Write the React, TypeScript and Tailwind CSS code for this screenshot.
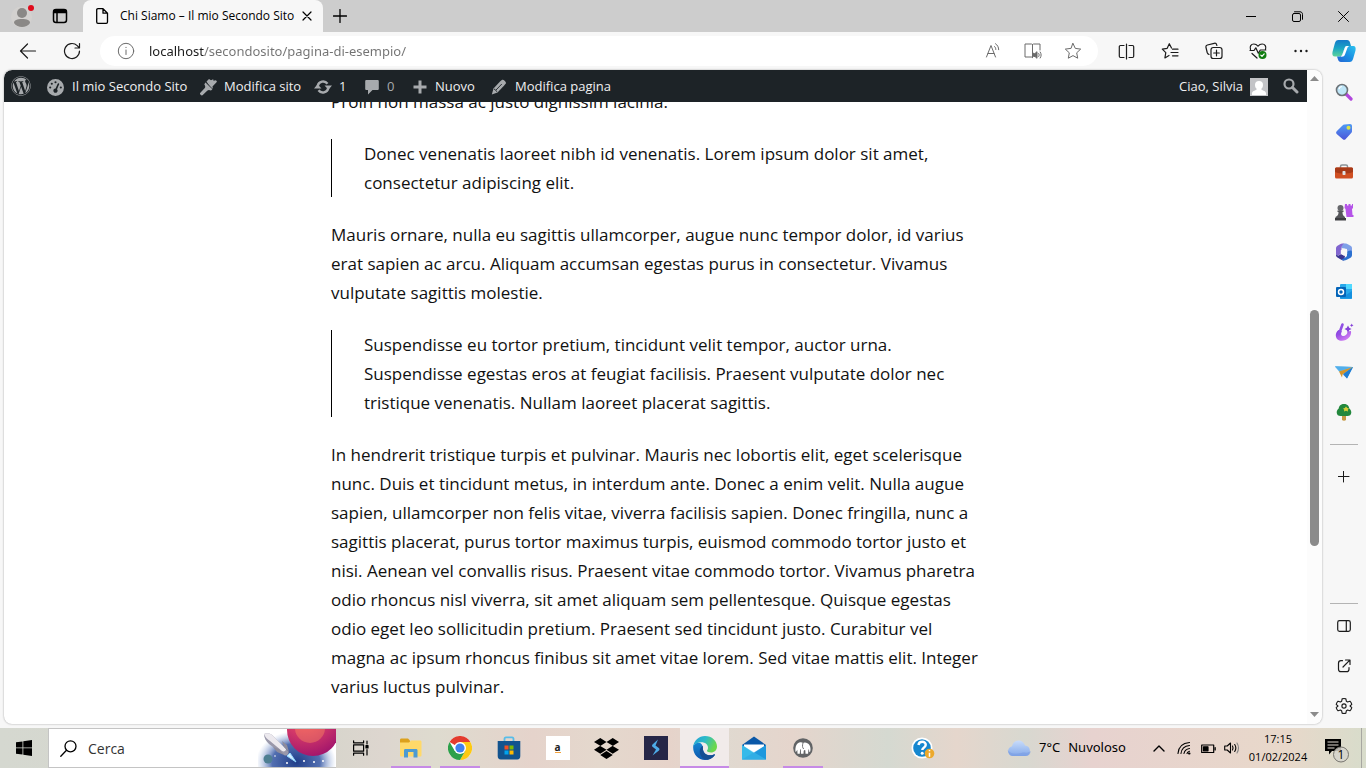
import type { ReactNode } from "react";
import { FaWordpress, FaDropbox } from "react-icons/fa";
import { FaGaugeHigh } from "react-icons/fa6";

type DrawProps = { size?: number; box?: string; width?: number; className?: string; children: ReactNode };

function Line({ size = 20, box = "0 0 20 20", width = 1.2, className, children }: DrawProps) {
  return (
    <svg width={size} height={size} viewBox={box} fill="none" stroke="currentColor" strokeWidth={width} strokeLinecap="round" strokeLinejoin="round" className={className} aria-hidden="true">
      {children}
    </svg>
  );
}

function Art({ size = 20, box = "0 0 20 20", className, children }: DrawProps) {
  return (
    <svg width={size} height={size} viewBox={box} className={className} aria-hidden="true">
      {children}
    </svg>
  );
}

function IconButton({ label, className, children }: { label: string; className: string; children: ReactNode }) {
  return (
    <button type="button" aria-label={label} className={`flex shrink-0 items-center justify-center ${className}`}>
      {children}
    </button>
  );
}

function TitleBar() {
  return (
    <header className="flex h-8 items-stretch bg-[#cdcdcd] text-black">
      <IconButton label="Profilo" className="w-11">
        <Art size={24} box="0 0 24 24">
          <circle cx="11.500" cy="13" r="10.500" fill="#d3d1cf" />
          <circle cx="12" cy="9" r="5" fill="#8a8886" />
          <path d="M4 19c0-3 3-4 8-4s8 1 8 4c-1.500 2.500-5 4-8 4s-6.500-1.500-8-4z" fill="#8a8886" />
          <circle cx="21" cy="4" r="3" fill="#e00b1c" />
        </Art>
      </IconButton>
      <IconButton label="Aree di lavoro" className="w-8">
        <Line size={16} box="0 0 16 16" width={1.5}>
          <rect x="1.500" y="1.500" width="13" height="13" rx="2.500" />
          <path d="M2 3.500h12M5 5v9" />
          <path d="M2 2.500h12v2H2z" fill="currentColor" />
        </Line>
      </IconButton>
      <div className="ml-[7px] flex w-60 items-center rounded-t-lg bg-[#f7f7f7]">
        <Line size={16} box="0 0 16 16" width={1.3} className="ml-[11px] shrink-0">
          <path d="M2.700 2c0-.8.500-1.300 1.300-1.300h5l4.500 4.500V14c0 .8-.5 1.300-1.300 1.300H4c-.8 0-1.300-.5-1.300-1.300zM9 .800V5.200h4.400" />
        </Line>
        <span className="ml-2.5 flex-1 whitespace-nowrap font-['Open_Sans','Noto_Sans',sans-serif] text-[12px]">Chi Siamo – Il mio Secondo Sito</span>
        <IconButton label="Chiudi scheda" className="mr-1.5 h-5 w-5">
          <Line size={10} box="0 0 10 10"><path d="M1 1l8 8M9 1l-8 8" /></Line>
        </IconButton>
      </div>
      <IconButton label="Nuova scheda" className="ml-px w-8">
        <Line size={14} box="0 0 14 14" width={1.3}><path d="M7 .500v13M.500 7h13" /></Line>
      </IconButton>
      <div className="ml-auto flex">
        <IconButton label="Riduci a icona" className="w-[46px]">
          <Line size={10} box="0 0 10 10" width={1}><path d="M0 5.500h10" /></Line>
        </IconButton>
        <IconButton label="Ripristina" className="w-[46px]">
          <Line size={11} box="0 0 11 11" width={1}>
            <rect x=".5" y="2.500" width="8" height="8" rx="1.500" />
            <path d="M2.500 .800h5.500c1.500 0 2.500 1 2.500 2.500v5" />
          </Line>
        </IconButton>
        <IconButton label="Chiudi" className="w-[46px]">
          <Line size={11} box="0 0 11 11" width={1}><path d="M.500.500l10 10M10.500.500l-10 10" /></Line>
        </IconButton>
      </div>
    </header>
  );
}

function Toolbar() {
  return (
    <div className="flex h-[38px] items-center bg-[#f7f7f7] text-[#1b1b1b]">
      <IconButton label="Indietro" className="ml-1 h-8 w-12">
        <Line size={18} box="0 0 18 18" width={1.2}><path d="M16.500 9H1.500M8.500 2L1.500 9l7 7" /></Line>
      </IconButton>
      <IconButton label="Aggiorna" className="h-8 w-10">
        <Line size={18} box="0 0 18 18" width={1.2}>
          <path d="M16.500 9a7.500 7.500 0 1 1-2.300-5.400L16.300 5.800M16.500 1.500V6H12" />
        </Line>
      </IconButton>
      <div className="ml-2 flex h-[30px] flex-1 items-center rounded-full bg-white text-[#6b6b6b]">
        <Line size={18} box="0 0 18 18" width={1} className="ml-[17px] shrink-0">
          <circle cx="9" cy="9" r="7.700" />
          <path d="M9 8v4.500M9 5.300v.3" />
        </Line>
        <input
          aria-label="Indirizzo"
          defaultValue="localhost/secondosito/pagina-di-esempio/"
          className="ml-3.5 min-w-0 flex-1 bg-linear-to-r from-[#1b1b1b] from-[55px] to-[#727272] to-[55px] bg-clip-text pt-px text-[13px] text-transparent outline-none"
        />
        <div className="mr-[5px] flex">
          <IconButton label="Leggi ad alta voce" className="h-7 w-10">
            <Line size={18} box="0 0 18 18" width={1}>
              <path d="M2.500 15L7 3.500 11.500 15M4 11.500h6" />
              <path d="M10.500 4.500c1 .8 1.300 1.700 1.300 3M11.500 1.700c2 1.300 3.200 3.500 3.200 6" />
            </Line>
          </IconButton>
          <IconButton label="Lettore immersivo" className="h-7 w-10">
            <Line size={18} box="0 0 18 18" width={1}>
              <path d="M8.500 2.500v13M8.500 2.500C8 2 7.500 2 7 2H1v13h6c1 0 1.500.2 1.500.7M8.500 2.500C9 2 9.500 2 10 2h6v6" />
              <path d="M9.500 11.500v3h1.500l2 1.800V9.700l-2 1.800z" fill="currentColor" />
              <path d="M14.700 11.500c.7 1 .7 2 0 3M16.200 10c1.300 2 1.300 4 0 6" />
            </Line>
          </IconButton>
          <IconButton label="Aggiungi ai preferiti" className="h-7 w-10">
            <Line size={18} box="0 0 18 18" width={1}>
              <path d="M9 1.500l2.300 4.900 5.400.700-4 3.700 1 5.400L9 13.600l-4.700 2.600 1-5.400-4-3.700 5.400-.7z" />
            </Line>
          </IconButton>
        </div>
      </div>
      <div className="ml-1.5 flex">
        <IconButton label="Schermo diviso" className="h-8 w-11">
          <Line size={17} box="0 0 17 17" width={1.2}>
            <path d="M8.500 1v15M6 2.500H2.500A1.200 1.200 0 0 0 1.300 3.700v9.600A1.200 1.200 0 0 0 2.500 14.500H6M11 2.500h3.500a1.200 1.200 0 0 1 1.200 1.200v9.600a1.200 1.200 0 0 1-1.200 1.200H11" />
          </Line>
        </IconButton>
        <IconButton label="Preferiti" className="h-8 w-11">
          <Line size={18} box="0 0 18 18" width={1.2}>
            <path d="M10.500 6L8.300 1.700 6.200 6.300 1.300 7.200l3.500 3.500-.9 5.200L8 13.500M11.500 7.200h5.500M10 10.500h7M11.500 13.800h5.500" />
          </Line>
        </IconButton>
        <IconButton label="Raccolte" className="h-8 w-11">
          <Line size={18} box="0 0 18 18" width={1.2}>
            <rect x="6" y="5.500" width="11" height="11" rx="2.300" />
            <path d="M11.500 8.200v5.600M8.700 11h5.600M4 12.500C2.800 12 2.500 11.500 2.200 10.500L1 5.500c-.3-1.300.2-2.200 1.400-2.500l6.800-1.700c1.300-.3 2.200.2 2.500 1.500l.2.700" />
          </Line>
        </IconButton>
        <IconButton label="Prestazioni del browser" className="h-8 w-11">
          <Line size={18} box="0 0 18 18" width={1.2}>
            <path d="M1.500 7.500C.500 4.500 2 2 4.800 2 6.800 2 8 3 9 4.200 10 3 11.200 2 13.200 2c2.800 0 4.300 2.500 3.300 5.500M1 8.500h4l1.800-2.700 2.500 5.400 2-3.200h5.500M3 11.500l5 4.500" />
            <circle cx="13.500" cy="13" r="4" fill="#107c10" stroke="none" />
            <path d="M11.800 13.100l1.200 1.200 2.200-2.400" stroke="#fff" />
          </Line>
        </IconButton>
        <IconButton label="Impostazioni e altro" className="h-8 w-[42px]">
          <Art size={16} box="0 0 16 16"><g fill="#1b1b1b"><circle cx="2.500" cy="8" r="1.200" /><circle cx="8" cy="8" r="1.200" /><circle cx="13.500" cy="8" r="1.200" /></g></Art>
        </IconButton>
        <IconButton label="Copilot" className="h-8 w-11">
          <Art size={24} box="0 0 24 24">
            <defs>
              <linearGradient id="cpA" x1="0" y1="0" x2="0" y2="1"><stop offset="0" stopColor="#1479c9" /><stop offset=".5" stopColor="#1aa5c4" /><stop offset="1" stopColor="#5ed49a" /></linearGradient>
              <linearGradient id="cpB" x1="1" y1="0" x2="0" y2="1"><stop offset="0" stopColor="#2dc3ee" /><stop offset=".5" stopColor="#1a8fe3" /><stop offset="1" stopColor="#2463d3" /></linearGradient>
            </defs>
            <path d="M6.500 1H15c1.800 0 2.500 1 3 2.500l1 3.500h-3.500c-1.700 0-2.500.8-3 2.500l-2 5.500c-.5 1.700-1.500 2.500-3.500 2.500H3c-2.500 0-3-2-2.500-4.500l2.300-8.500C3.500 2 4.500 1 6.500 1z" fill="url(#cpA)" />
            <path d="M17.500 23H9c-1.800 0-2.500-1-3-2.500L5 17.500h2.500c1.700 0 2.500-1 3-2.500l2-5.500C13 7.800 14 7 16 7h5c2.500 0 3 2 2.500 4.500l-2.300 8c-.7 2.500-1.700 3.500-3.700 3.500z" fill="url(#cpB)" />
            <path d="M14.700 7h2.500c-1 .5-1.500 1-2 2.500l-2.200 6c-.6 1.500-1.500 2.200-3.200 2.200H8.500c1-.5 1.500-1.500 2-2.700l2-5.500c.5-1.500 1.200-2.300 2.200-2.500z" fill="#fff" />
          </Art>
        </IconButton>
      </div>
    </div>
  );
}

function AdminBar() {
  const item = "flex h-8 items-center whitespace-nowrap pt-0.5";
  return (
    <nav aria-label="Barra degli strumenti" className="flex h-8 shrink-0 items-center rounded-tl-lg bg-[#1d2327] font-['Open_Sans','Noto_Sans',sans-serif] text-[13px] text-[#f0f0f1]">
      <a href="#wp" aria-label="Informazioni su WordPress" className="ml-[7px] flex h-8 w-9 items-center"><FaWordpress size={20} color="#a7aaad" /></a>
      <a href="#sito" className={`${item} w-[152px]`}><FaGaugeHigh size={17} color="#a7aaad" className="mr-2 shrink-0" />Il mio Secondo Sito</a>
      <a href="#editor" className={`${item} w-[115px]`}>
        <Art size={18} box="0 0 18 18" className="mr-[7px] shrink-0">
          <path d="M7.500 3.500L10 1l2 1.200 2.200-.9.300 1.500 2.500-.5 1 1.400-4.500 4.800.300 1.500-1 1.500z" fill="#a7aaad" />
          <path d="M6.700 4.300l6.800 6.800-1.500 1.500c-1.500-.7-2.800-.8-3.800.2L3.500 17.300c-1 .7-3.200-1.300-2.400-2.400l4.500-4.700c1-1 .8-2.300-.3-4z" fill="#a7aaad" />
          <path d="M6.800 4.300l6.600 6.600" stroke="#1d2327" strokeWidth=".8" />
        </Art>
        Modifica sito
      </a>
      <a href="#aggiornamenti" className={`${item} w-[50px]`}>
        <Art size={18} box="0 0 18 18" className="mr-[7px] shrink-0">
          <path d="M3.700 8A5.500 5.500 0 0 1 13.500 5.700M14.300 10a5.500 5.500 0 0 1-9.800 2.300" fill="none" stroke="#a7aaad" strokeWidth="2.400" />
          <path d="M10.500 7.500H18L14.500 11.700zM7.500 10.500H0L3.500 6.300z" fill="#a7aaad" />
        </Art>
        1
      </a>
      <a href="#commenti" className={`${item} w-[49px] text-[#a7aaad]`}>
        <Art size={16} box="0 0 16 16" className="mr-[7px] shrink-0"><path d="M2.500 1h11c.8 0 1.300.5 1.300 1.300v7.400c0 .8-.5 1.300-1.300 1.300H8.500L4 15.500V11H2.500c-.8 0-1.300-.5-1.300-1.300V2.300C1.200 1.500 1.700 1 2.500 1z" fill="#a7aaad" /></Art>
        0
      </a>
      <a href="#nuovo" className={`${item} w-[78px]`}>
        <Art size={14} box="0 0 14 14" className="mr-2 shrink-0"><path d="M5.500 .500h3v5H13.500v3H8.500v5h-3v-5H.500v-3h5z" fill="#a7aaad" /></Art>
        Nuovo
      </a>
      <a href="#pagina" className={item}>
        <Art size={16} box="0 0 16 16" className="mr-2 shrink-0">
          <path d="M9 2.500l1.800-1.600c1.500-1.200 5 2.100 4 3.700L13.200 6.500 6.500 13.500.800 15.500 2.500 9.500z" fill="#a7aaad" />
          <path d="M5 11L10.800 5M3 10c1.300.5 2.300 1.500 2.800 2.800" stroke="#1d2327" strokeWidth=".9" fill="none" />
        </Art>
        Modifica pagina
      </a>
      <a href="#profilo" className={`${item} ml-auto`}>
        Ciao, Silvia
        <Art size={18} box="0 0 18 18" className="ml-[7px]">
          <rect width="18" height="18" fill="#c3c4c7" />
          <path d="M9 3a4 4 0 0 0-4 4c0 2 .8 3 1.800 4-.3 1.500-4.300 1.500-4.800 4v2h14v-2c-.5-2.500-4.500-2.500-4.800-4 1-1 1.800-2 1.800-4a4 4 0 0 0-4-4z" fill="#fff" />
        </Art>
      </a>
      <IconButton label="Cerca nel sito" className="ml-[11px] mr-1 h-8 w-6">
        <Art size={16} box="0 0 16 16"><circle cx="6" cy="6" r="4.500" fill="none" stroke="#a7aaad" strokeWidth="2.200" /><path d="M9.500 9.500L14 14" stroke="#a7aaad" strokeWidth="3" strokeLinecap="round" /></Art>
      </IconButton>
    </nav>
  );
}

function Lines({ rows }: { rows: string[] }) {
  return (
    <>
      {rows.map((row) => (
        <span key={row} className="block whitespace-nowrap">{row} </span>
      ))}
    </>
  );
}

function Article() {
  return (
    <article className="-mt-[15px] ml-[327px] flex w-[650px] flex-col gap-[23px] font-['Open_Sans','Noto_Sans',sans-serif] text-[17px] leading-[29px] text-[#111]">
      <p><Lines rows={["Proin non massa ac justo dignissim lacinia."]} /></p>
      <blockquote className="border-l border-black pl-8">
        <Lines rows={["Donec venenatis laoreet nibh id venenatis. Lorem ipsum dolor sit amet,", "consectetur adipiscing elit."]} />
      </blockquote>
      <p>
        <Lines rows={["Mauris ornare, nulla eu sagittis ullamcorper, augue nunc tempor dolor, id varius", "erat sapien ac arcu. Aliquam accumsan egestas purus in consectetur. Vivamus", "vulputate sagittis molestie."]} />
      </p>
      <blockquote className="border-l border-black pl-8">
        <Lines rows={["Suspendisse eu tortor pretium, tincidunt velit tempor, auctor urna.", "Suspendisse egestas eros at feugiat facilisis. Praesent vulputate dolor nec", "tristique venenatis. Nullam laoreet placerat sagittis."]} />
      </blockquote>
      <p>
        <Lines
          rows={[
            "In hendrerit tristique turpis et pulvinar. Mauris nec lobortis elit, eget scelerisque",
            "nunc. Duis et tincidunt metus, in interdum ante. Donec a enim velit. Nulla augue",
            "sapien, ullamcorper non felis vitae, viverra facilisis sapien. Donec fringilla, nunc a",
            "sagittis placerat, purus tortor maximus turpis, euismod commodo tortor justo et",
            "nisi. Aenean vel convallis risus. Praesent vitae commodo tortor. Vivamus pharetra",
            "odio rhoncus nisl viverra, sit amet aliquam sem pellentesque. Quisque egestas",
            "odio eget leo sollicitudin pretium. Praesent sed tincidunt justo. Curabitur vel",
            "magna ac ipsum rhoncus finibus sit amet vitae lorem. Sed vitae mattis elit. Integer",
            "varius luctus pulvinar.",
          ]}
        />
      </p>
    </article>
  );
}

function ScrollBar() {
  return (
    <div className="flex w-[15px] shrink-0 flex-col items-center rounded-r-lg bg-[#fcfcfc]">
      <Art size={9} box="0 0 9 9" className="mt-1 shrink-0"><path d="M0 7l4.500-5L9 7z" fill="#8b8b8b" /></Art>
      <div className="flex-[227]" />
      <div className="w-[9px] flex-[236] rounded-full bg-[#8b8b8b]" />
      <div className="flex-[164]" />
      <Art size={9} box="0 0 9 9" className="mb-[5px] shrink-0"><path d="M0 2l4.500 5L9 2z" fill="#8b8b8b" /></Art>
    </div>
  );
}

function Sidebar() {
  const tools: [string, ReactNode][] = [
    ["Cerca", <Art key="a" size={18} box="0 0 18 18"><path d="M11 11l5 5" stroke="#b146dd" strokeWidth="3.200" strokeLinecap="round" /><circle cx="7" cy="7" r="5.500" fill="#bfe6f8" stroke="#6d7378" strokeWidth="1.600" /><path d="M4 6a3.500 3.500 0 0 1 3-2.500" stroke="#fff" strokeWidth="1.200" fill="none" /></Art>],
    ["Shopping", <Art key="b" size={18} box="0 0 18 18"><defs><linearGradient id="tag" x1="0" y1="0" x2="0" y2="1"><stop stopColor="#4f9bf5" /><stop offset="1" stopColor="#4b55d9" /></linearGradient></defs><path d="M9.500 1.500L15 1c1.300 0 2 .700 2 2v5c0 1-.3 1.500-1 2.200l-5.500 6c-.8.800-1.800.800-2.700 0L1.700 11c-.8-.8-.8-1.800 0-2.700l5.800-5.800c.6-.6 1.100-.9 2-1z" fill="url(#tag)" /><circle cx="13.500" cy="4.800" r="2" fill="#d9e34a" /></Art>],
    ["Strumenti", <Art key="c" size={20}><path d="M6.500 6V4.500c0-1 .5-1.500 1.500-1.500h4c1 0 1.500.5 1.500 1.500V6" fill="none" stroke="#8b9297" strokeWidth="1.500" /><rect x="1" y="5.500" width="18" height="11" rx="1.500" fill="#cf4f22" /><path d="M1 7c0-1 .5-1.500 1.500-1.500h15c1 0 1.500.5 1.500 1.500v3c-5 2-13 2-18 0z" fill="#a73a18" /><rect x="8.500" y="9" width="3" height="4" rx=".8" fill="#dfe3e6" /></Art>],
    ["Giochi", <Art key="d" size={20}><path d="M11 2h2v1.500h1.500V2h2v1.500H18V2h1v4l-1 1 .5 6h1v2h-7l-1-8-1-1z" fill="#b554e8" /><circle cx="6.500" cy="6" r="3" fill="#66676b" /><path d="M3.500 8.500h6v1.500H8.500c0 2.500.5 3.500 2.500 5V18H1.500v-3c2.500-1.500 3-2.500 3-5h-1z" fill="#55565a" /><path d="M1 16h11v2.500H1z" fill="#3c3d40" /></Art>],
    ["Microsoft 365", <Art key="e" size={20}>
      <path d="M10 1.500h1.500c1 0 1.500.2 2.300.7l2.700 1.600c1 .6 1.500 1.400 1.500 2.700V12l-5-2.500V7L7.500 6C7.500 4 8.300 1.500 10 1.500z" fill="#7fa0e8" />
      <path d="M10.500 1.500C8.500 2.500 7.500 4 7.500 6.500V12L3 13.800c-.7-.6-1-1.400-1-2.300v-5c0-1.300.5-2 1.500-2.700l3-1.700c1-.6 2-.6 4-.6z" fill="#8165cf" />
      <path d="M2 11.500c0 1.500 1.500 2.500 3 1.700L7.500 12l3.500 2-1 4.500c-1 0-2-.2-2.800-.7l-3.700-2.200C2.500 15 2 14 2 13z" fill="#3a3591" />
      <path d="M18 10v3c0 1.300-.5 2-1.500 2.700l-3.700 2.100c-1.500.8-3.500 1-4.800.200-1-.5.500-.8 1.500-1.500l2.500-1.500c.7-.5 1-1 1-2V9.500l3.500-1c.8-.2 1.500.5 1.500 1.500z" fill="#2b70d0" />
      <path d="M10 6.500l3.200 1.800v3.600L10 13.700l-3.200-1.800V8.300z" fill="#f7f7f7" />
    </Art>],
    ["Outlook", <Art key="f" size={20}><rect x="6" y="2" width="12" height="15" rx="1" fill="#28a8ea" /><path d="M12 2h6v5h-6z" fill="#50d9ff" /><path d="M6 9l6 4 6-4v7.500H6z" fill="#1490df" /><rect x="2" y="5" width="10" height="10" rx="1" fill="#0364b8" /><circle cx="7" cy="10" r="2.500" fill="none" stroke="#fff" strokeWidth="1.500" /></Art>],
    ["Designer", <Art key="g" size={20}><defs><linearGradient id="des" x1="0" y1="0" x2="1" y2="1"><stop stopColor="#7a35dc" /><stop offset="1" stopColor="#e58df8" /></linearGradient></defs><path d="M4.500 8C.500 11 1 17 5.500 18.500 12 20 18 15 17 9l-3.500.5c0 3.500-3.500 5.500-5.500 4.200C6.500 12.500 7 11 8 9.500z" fill="url(#des)" /><path d="M8.500 2.500L5 12" stroke="#9150e4" strokeWidth="2.600" strokeLinecap="round" /><path d="M14 3.500l1.200 2.300L17.500 7l-2.300 1.200L14 10.500l-1.200-2.300L10.500 7l2.300-1.200z" fill="#8541d9" /><path d="M17.700 1.500l.6 1.200 1.200.6-1.200.6-.6 1.200-.6-1.200-1.200-.6 1.200-.6z" fill="#8541d9" /></Art>],
    ["Drop", <Art key="h" size={20}><path d="M1 4.500L19 5l-6 11.500-3.500-5z" fill="#319be5" /><path d="M1 4.500L19 5 9.500 11.500 5 9.500z" fill="#63bdf0" /><path d="M1 4.500L19 5 5.500 9z" fill="#52aeea" /><path d="M5 9.500L19 5 8.500 12.500 8 15.500z" fill="#d5952d" /><path d="M19 5l-6 11.500-4-4z" fill="#217dd3" /></Art>],
    ["Albero", <Art key="i" size={20}><path d="M8 12h4v6c-1 1-3 1-4 0z" fill="#c79a45" /><path d="M10 2c4 0 5 2.500 5.300 4.500 1.200 1 2 2.300 2 4 0 2.500-1.800 3.500-3.800 3.500h-7c-2 0-3.800-1-3.800-3.500 0-1.700.8-3 2-4C5 4.500 6 2 10 2z" fill="#23883d" /><path d="M12 4.500l1.200 1.500 1.800.5-1.200 1.200.2 1.800-2-.8-2 .8.200-1.800L9 6.500l1.800-.5z" fill="#d7ce38" /></Art>],
  ];
  return (
    <aside className="flex w-11 shrink-0 flex-col items-center pt-0.5 text-[#1b1b1b]">
      {tools.map(([label, art]) => (
        <IconButton key={label} label={label} className="h-10 w-11">{art}</IconButton>
      ))}
      <hr className="mt-3 w-7 border-[#b4b4b4]" />
      <IconButton label="Personalizza" className="mt-3 h-10 w-11">
        <Line size={12} box="0 0 12 12" width={1}><path d="M5.500 0v11M0 5.500h11" /></Line>
      </IconButton>
      <hr className="mt-auto w-7 border-[#b4b4b4]" />
      <IconButton label="Nascondi barra laterale" className="mt-0.5 h-10 w-11">
        <Line size={14} box="0 0 14 14"><rect x=".7" y="1.700" width="12.600" height="10.600" rx="1.800" /><path d="M9.300 2v10" /></Line>
      </IconButton>
      <IconButton label="Apri collegamento" className="h-10 w-11">
        <Line size={14} box="0 0 14 14"><path d="M5.500 1.700H4A2.500 2.500 0 0 0 1.500 4.200v6A2.500 2.500 0 0 0 4 12.700h5.500a2.500 2.500 0 0 0 2.500-2.500V8.500M8.500 1h4.500v4.500M12.800 1.200L6 8" /></Line>
      </IconButton>
      <IconButton label="Impostazioni" className="mb-0.5 h-10 w-11">
        <Line size={18} box="0 0 24 24" width={1.5}>
          <path d="M9.500 2.500C11 1.900 13 1.900 14.500 2.500L15.200 5.700l1.500.9 3.200-1c1.200 1.200 2 2.700 2.500 4.300L20 12l2.400 2.100c-.5 1.600-1.300 3.100-2.500 4.300l-3.200-1-1.500.9-.7 3.200c-1.500.6-3.500.6-5 0l-.7-3.200-1.500-.9-3.200 1c-1.200-1.200-2-2.700-2.500-4.300L4 12 1.600 9.900c.5-1.600 1.300-3.100 2.500-4.300l3.200 1 1.500-.9z" />
          <circle cx="12" cy="12" r="2.800" />
        </Line>
      </IconButton>
    </aside>
  );
}

function SearchArt() {
  return (
    <svg width="78" height="38" viewBox="0 0 78 38" className="shrink-0" aria-hidden="true">
      <defs>
        <radialGradient id="sky"><stop offset="0" stopColor="#1f3d88" /><stop offset=".6" stopColor="#3f5fa8" stopOpacity=".9" /><stop offset="1" stopColor="#9cb4df" stopOpacity="0" /></radialGradient>
        <radialGradient id="planet" cx=".35" cy=".15" r=".9"><stop offset="0" stopColor="#ff8a62" /><stop offset=".4" stopColor="#dc3f68" /><stop offset="1" stopColor="#a0146c" /></radialGradient>
      </defs>
      <ellipse cx="38" cy="33" rx="40" ry="31" fill="url(#sky)" />
      <circle cx="55" cy="1" r="26" fill="url(#planet)" />
      <circle cx="52" cy="-1" r="15" fill="#ff9360" fillOpacity=".4" />
      <circle cx="10" cy="30" r="4.500" fill="#4e7f92" />
      <path d="M6 5c4-2 8 0 11 4l13 13c2 2-1 6-4 4L11 15C8 12 6 9 6 5z" fill="#9a98aa" />
      <path d="M6 5c4-2 8 0 11 4l11 11c0 2-2 3-4 2L12 12C9 10 7 8 6 5z" fill="#ece9ee" />
      <path d="M15 18l6 2 5 6-7-3zM24 12l5 4 2 7-5-5z" fill="#8e8c9c" />
      <path d="M32 24l6 9-9-6z" fill="#d5f0ff" stroke="#90d5ff" />
      <g fill="#fff"><circle cx="29" cy="34" r="1" /><circle cx="46" cy="32" r="1" /><circle cx="56" cy="33" r="1" /><circle cx="65" cy="32" r="1" /><circle cx="17" cy="27" r=".8" /></g>
    </svg>
  );
}

function Taskbar() {
  const apps: [string, ReactNode, string][] = [
    ["Esplora file", <Art key="1" size={24} box="0 0 24 24"><path d="M1 4c0-1 .500-1.500 1.500-1.500H9l2 2V7H1z" fill="#dca11d" /><path d="M1 6.500h9l2-2h9c1 0 1.500.5 1.500 1.500v13c0 1-.5 1.500-1.500 1.500H2.500c-1 0-1.500-.5-1.500-1.500z" fill="#ffd969" /><path d="M5 21.500v-7c0-1 .500-1.500 1.500-1.500h10.500c1 0 1.500.5 1.500 1.500v7h-4v-5.500H9v5.500z" fill="#4d9bd2" /></Art>, "under"],
    ["Chrome", <Art key="2" size={24} box="0 0 24 24"><circle cx="12" cy="12" r="12" fill="#fff" /><path d="M12 12L1.600 6A12 12 0 0 1 22.400 6H12z" fill="#e33b2e" /><path d="M12 6h10.400A12 12 0 0 1 12 24l5.200-9z" fill="#fdc912" /><path d="M1.600 6A12 12 0 0 0 12 24l5.200-9L12 12 6.800 15z" fill="#2da04a" /><circle cx="12" cy="12" r="6" fill="#fff" /><circle cx="12" cy="12" r="4.600" fill="#4080ee" /></Art>, "under"],
    ["Microsoft Store", <Art key="3" size={24} box="0 0 24 24"><path d="M7.500 6V3c0-1 .500-1.700 1.500-1.700h6c1 0 1.500.7 1.500 1.700v3" fill="none" stroke="#57bde9" strokeWidth="1.800" /><path d="M.700 5h22.600v15c0 2-1 3.500-3 3.500H3.700c-2 0-3-1.500-3-3.500z" fill="#12538e" /><path d="M7.500 9.500h4v4h-4z" fill="#f25022" /><path d="M12.500 9.500h4v4h-4z" fill="#7fba00" /><path d="M7.500 14.500h4v4h-4z" fill="#00a4ef" /><path d="M12.500 14.500h4v4h-4z" fill="#ffb900" /></Art>, ""],
    ["Amazon", <span key="4" className="flex h-6 w-6 items-center justify-center bg-white"><span className="border-b border-[#f5a33c] text-[10px] leading-[9px] font-bold text-[#222]">a</span></span>, ""],
    ["Dropbox", <FaDropbox key="5" size={25} color="#000" />, ""],
    ["Shadow", <Art key="6" size={24} box="0 0 24 24"><rect width="24" height="24" fill="#262647" /><path d="M14 3.500L8.500 8.500c-.8.800-.6 1.800.3 2.500l3.200 2.500-3.500 6L15 14.500c.8-.8.600-1.700-.2-2.400L11.500 9.500z" fill="#4dabe8" /></Art>, ""],
    ["Edge", <Art key="7" size={24} box="0 0 24 24"><defs><linearGradient id="edA" x1="0" y1="0" x2="1" y2=".4"><stop stopColor="#229fd8" /><stop offset=".5" stopColor="#2dbbc8" /><stop offset="1" stopColor="#6bd84c" /></linearGradient><linearGradient id="edB" x1="0" y1="0" x2="0" y2="1"><stop stopColor="#1686d2" /><stop offset="1" stopColor="#0d57ac" /></linearGradient></defs>
      <path d="M.300 9.500C-.800 17 4.500 24 12 24c4 0 7.500-1.800 9.700-4.800.4-.6-.2-1.100-.8-.8-6 2.600-11-1-11-6.200C9.900 9 8 6 4 6.500z" fill="url(#edB)" />
      <path d="M9.900 9.800c-2 1-3.200 3.200-3.200 5.700 0 4.500 3.500 8.300 7.600 8.300 3-.5 5.700-2.200 7.400-4.600.4-.6-.2-1.100-.8-.8-6 2.600-11-1-11-5.700z" fill="#144e93" />
      <path d="M.200 10.500C1 4.500 6 0 12 0c7 0 12 5 12 10.500 0 3.800-2.700 6-6 6-2.500 0-4-.6-4-1.700 0-.7 1-1.200 1-3C15 8.500 12 6.300 8.500 6.300 4.500 6.300 1.500 8 .200 10.500z" fill="url(#edA)" />
    </Art>, "active"],
    ["Posta", <Art key="8" size={24} box="0 0 24 24"><path d="M0 9l12-8.500L24 9v14H0z" fill="#0a58a8" /><path d="M2 8.500h20V18H2z" fill="#fff" /><path d="M0 9l12 8L24 9v14.500H0z" fill="#27aee4" /><path d="M24 9v14.500H0z" fill="#1789d8" fillOpacity=".6" /><path d="M0 9v14.500h24z" fill="#49caf0" fillOpacity=".45" /></Art>, ""],
    ["MAMP", <Art key="9" size={20}>
      <circle cx="10" cy="10" r="9.800" fill="#626466" />
      <path d="M2.500 14C2 8.500 3.500 4.800 7.500 4.300c1-.1 1.800.2 2.500.7.700-.4 1.300-.6 2-.5 3.500.3 5.500 3 5.500 6.500 0 1.500-.2 2.700-.8 3.300-.6-.5-.5-1.300-.7-2.800h-.6l-.3 4.200h-2.600l-.2-3.500-.8-.2c-.5.300-.7.500-.8 1l-.2 2.700H8l-.2-4.200-.7-.2-.3 4.400H4.500l-.2-3.900c-.6.700-.6 1.700-1.800 2.200z" fill="#fff" />
      <path d="M10 5c-.8 2.500-.7 4.500.7 6" stroke="#626466" strokeWidth=".9" fill="none" />
    </Art>, "under"],
  ];
  return (
    <footer className="flex h-10 items-stretch bg-[linear-gradient(90deg,#d5d8d0_0%,#d7d5cc_24%,#ddd6cf_28%,#dedbcf_32%,#e5d3cb_39%,#e4d8cd_44%,#e6d3ca_49%,#e0d9d0_53%,#e5d5cc_58%,#d5d9d1_65%,#e5d6cc_70%,#d8d8d0_75%,#e7d2cf_80%,#e8d8ca_94%,#d8dccb_100%)] text-black">
      <IconButton label="Start" className="w-12">
        <Art size={16} box="0 0 16 16"><path d="M0 2.300l6.500-.9v6.100H0zM7.300 1.300L16 0v7.500H7.300zM0 8.300h6.500v6.300L0 13.700zM7.300 8.300H16V16l-8.700-1.200z" /></Art>
      </IconButton>
      <label className="flex h-10 w-[288px] items-center border border-r-0 border-[#c4c4c4] bg-white">
        <Line size={17} box="0 0 17 17" width={1.3} className="ml-[11px] shrink-0"><circle cx="10.500" cy="6.300" r="5.500" /><path d="M6.500 10.300L.800 16.200" /></Line>
        <input aria-label="Cerca" placeholder="Cerca" className="ml-[11px] min-w-0 flex-1 font-['Open_Sans','Noto_Sans',sans-serif] text-[14px] outline-none placeholder:text-[#333]" />
        <SearchArt />
      </label>
      <IconButton label="Visualizzazione attività" className="w-[50px]">
        <Line size={16} box="0 0 16 16" width={1.2}><path d="M.600.800v2h10v-2M.600 15.200v-2h10v2M.600 4.800h10v6.400H.600zM14 1v3M14 9.500V15" /><path d="M13 5.500h2v2.500h-2z" fill="currentColor" /></Line>
      </IconButton>
      <div className="flex">
        {apps.map(([label, art, state]) => (
          <button key={label} type="button" aria-label={label} className={`flex w-[49px] flex-col items-center ${state === "active" ? "bg-[#f1ebea]" : ""}`}>
            <span className="flex h-[38px] items-center pt-0.5">{art}</span>
            <span className={`h-0.5 ${state === "active" ? "w-full bg-[#c68ae6]" : state === "under" ? "w-10 bg-[#c68ae6]" : "w-10"}`} />
          </button>
        ))}
      </div>
      <div className="ml-auto flex items-stretch font-['Open_Sans','Noto_Sans',sans-serif]">
        <IconButton label="Guida" className="mr-[72px] w-6">
          <Art size={24} box="0 0 24 24"><circle cx="11" cy="12" r="10.500" fill="#fff" /><circle cx="11" cy="12" r="8.800" fill="#1687cf" /><path d="M7.500 9C8 4.800 15 4.800 14.700 9c-.2 2.500-3.200 2.700-3.400 5" fill="none" stroke="#fff" strokeWidth="2.500" /><circle cx="11.200" cy="17.200" r="1.500" fill="#fff" /><circle cx="18.500" cy="17.500" r="4.800" fill="#eca92c" /><path d="M18.500 16.700v4M18.500 14v1.300" stroke="#fff" strokeWidth="1.500" /></Art>
        </IconButton>
        <button type="button" className="flex w-[140px] items-center whitespace-nowrap font-['Noto_Sans','Open_Sans',sans-serif] text-[13px]">
          <Art size={24} box="0 0 24 24" className="mr-2 shrink-0"><defs><linearGradient id="cl" x1="0" y1="0" x2="0" y2="1"><stop stopColor="#c9dcfa" /><stop offset="1" stopColor="#83a9ea" /></linearGradient></defs><path d="M5.500 20a5 5 0 0 1-.5-9.800C6 6.500 8.500 4.500 11.500 4.500c3.500 0 5.500 2 6.500 5a5.300 5.300 0 0 1 .5 10.500z" fill="url(#cl)" /><path d="M.700 14c.5 4 2.500 6 5 6h13c3 0 4.800-2 5-5-3 2.500-5 1.500-8 1.500C12 18 4 19 .700 14z" fill="#799de3" fillOpacity=".6" /></Art>
          <span className="mr-2">7°C</span>
          <span>Nuvoloso</span>
        </button>
        <IconButton label="Mostra icone nascoste" className="w-6">
          <Line size={12} box="0 0 12 12" width={1.4}><path d="M1 9l5-5 5 5" /></Line>
        </IconButton>
        <IconButton label="Rete" className="w-[26px]">
          <Line size={14} box="0 0 14 14" width={1.1}><path d="M1 12.500C1.500 6 6 2 12.500 1.500M4 12.500C4.500 8 8 5 12.500 4.500M7 12.500c.5-2.500 2.500-4.500 5.500-5M10 12.500c.3-1 1-2 2.500-2.300" /><path d="M12 12.500h.5" strokeWidth="2" /></Line>
        </IconButton>
        <IconButton label="Batteria" className="w-[23px]">
          <Line size={15} box="0 0 15 15" width={1.2}><path d="M.700 4h12v7.500h-12zM14.200 6.500v2.500" /><path d="M2.500 5.800h4.500v4H2.500z" fill="currentColor" /></Line>
        </IconButton>
        <IconButton label="Volume" className="w-[23px]">
          <Line size={16} box="0 0 16 16" width={1.1}><path d="M.700 6v4h2.500L6.500 13V3L3.200 6zM8.500 6c.7 1.300.7 2.700 0 4M10.700 4.500c1.500 2.300 1.500 4.700 0 7" /><path d="M13 3c2 3.300 2 6.700 0 10" stroke="#888" /></Line>
        </IconButton>
        <button type="button" className="flex w-[70px] flex-col items-center pt-0.5 text-[11px] leading-[18px]">
          <span>17:15</span>
          <span>01/02/2024</span>
        </button>
        <IconButton label="Notifiche" className="w-12">
          <svg width="26" height="26" viewBox="0 0 26 26" aria-hidden="true" className="mt-1">
            <path d="M1 2h16v12H8l-3 3.500V14H1z" />
            <path d="M3.500 5h11M3.500 8h11M3.500 11h7" stroke="#e0dad2" strokeWidth="1.100" />
            <circle cx="17" cy="17.500" r="7.500" fill="#d6d3cd" fillOpacity=".85" stroke="#77756f" />
            <text x="17" y="22" textAnchor="middle" fontSize="12">1</text>
          </svg>
        </IconButton>
        <div className="mr-1 w-px bg-[#a7a7a1]" />
      </div>
    </footer>
  );
}

export default function App() {
  return (
    <div className="flex h-screen flex-col overflow-hidden bg-[#f7f7f7] font-['Noto_Sans','Open_Sans',sans-serif]">
      <TitleBar />
      <Toolbar />
      <div className="flex min-h-0 flex-1">
        <main className="mb-1 ml-1 flex min-w-0 flex-1 overflow-hidden rounded-lg bg-white shadow-[0_0_2px_#999]">
          <div className="flex min-w-0 flex-1 flex-col">
            <AdminBar />
            <div className="min-h-0 flex-1 overflow-hidden">
              <Article />
            </div>
          </div>
          <ScrollBar />
        </main>
        <Sidebar />
      </div>
      <Taskbar />
    </div>
  );
}
